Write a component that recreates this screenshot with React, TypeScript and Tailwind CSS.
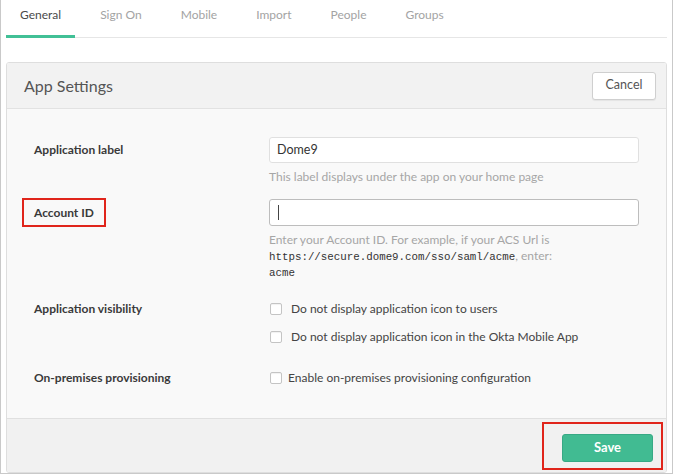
const tabs = ["General", "Sign On", "Mobile", "Import", "People", "Groups"];

function Checkbox() {
  return (
    <span className="inline-block w-[12px] h-[12px] shrink-0 bg-white border border-[#c4c4c4] rounded-[2px] shadow-[inset_0_1px_1px_rgba(0,0,0,0.06)]"></span>
  );
}

const mono = { fontFamily: "'Liberation Mono', monospace" };

export default function App() {
  return (
    <div
      className="w-[673px] h-[474px] bg-white border-x border-b border-[#c9c9c9] text-[#333] overflow-hidden"
      style={{ fontFamily: "Lato, 'Open Sans', sans-serif" }}
    >
      {/* Tabs */}
      <div className="ml-[5px] mr-[5px] flex gap-[11px] border-b border-[#e6e6e6] h-[38px]">
        {tabs.map((t, i) => (
          <div
            key={t}
            className={
              "px-[14px] pt-[6px] h-[38px] text-[12px] " +
              (i === 0
                ? "text-[#4a4a4a] border-b-[3px] border-[#41c096]"
                : "text-[#a3a3a3]")
            }
          >
            {t}
          </div>
        ))}
      </div>

      {/* Panel */}
      <div className="mt-[24px] mx-[5px] w-[661px] h-[411px] border border-[#dedede] rounded-[3px] flex flex-col overflow-hidden">
        <div className="h-[46px] shrink-0 bg-[#f2f2f2] border-b border-[#e2e2e2] flex items-center justify-between pl-[17px] pr-[10px]">
          <span className="text-[16px] text-[#555]">App Settings</span>
          <button className="w-[64px] h-[28px] bg-white border border-[#cfcfcf] rounded-[3px] text-[12.5px] text-[#555] shadow-[0_1px_1px_rgba(0,0,0,0.06)]">
            Cancel
          </button>
        </div>

        <div className="flex-1 bg-[#f9f9f9] pt-[28px] px-[27px] text-[12px]">
          {/* Application label */}
          <div className="grid grid-cols-[235px_1fr]">
            <div className="h-[26px] flex items-center font-bold text-[#3a3a3a]">Application label</div>
            <div>
              <div className="h-[26px] bg-white border border-[#e0e0e0] rounded-[3px] flex items-center px-[7px] text-[12.5px] text-[#333]">
                Dome9
              </div>
              <div className="mt-[6px] leading-[16px] text-[#a6a6a6]">
                This label displays under the app on your home page
              </div>
            </div>
          </div>

          {/* Account ID */}
          <div className="grid grid-cols-[235px_1fr] mt-[14px]">
            <div className="h-[27px] flex items-center">
              <span className="-ml-[12px] h-[29px] border-2 border-[#e0251b] px-[10px] flex items-center font-bold text-[#3a3a3a]">
                Account ID
              </span>
            </div>
            <div>
              <div className="h-[27px] bg-white border border-[#bdbdbd] rounded-[3px] flex items-center px-[8px]">
                <span className="w-px h-[15px] bg-[#444]"></span>
              </div>
              <div className="mt-[6px] leading-[16px] text-[#a6a6a6]">
                <div>Enter your Account ID. For example, if your ACS Url is</div>
                <div>
                  <span className="text-[10.8px] text-[#333]" style={mono}>
                    https://secure.dome9.com/sso/saml/acme
                  </span>
                  , enter:
                </div>
                <div className="text-[10.8px] text-[#333]" style={mono}>
                  acme
                </div>
              </div>
            </div>
          </div>

          {/* Application visibility */}
          <div className="grid grid-cols-[235px_1fr] mt-[18px]">
            <div className="h-[20px] flex items-center font-bold text-[#3a3a3a]">Application visibility</div>
            <div className="flex flex-col gap-[8px] text-[#444]">
              <div className="h-[20px] flex items-center gap-[9px] pl-px">
                <Checkbox />
                <span>Do not display application icon to users</span>
              </div>
              <div className="h-[20px] flex items-center gap-[9px] pl-px">
                <Checkbox />
                <span>Do not display application icon in the Okta Mobile App</span>
              </div>
            </div>
          </div>

          {/* On-premises provisioning */}
          <div className="grid grid-cols-[235px_1fr] mt-[21px]">
            <div className="h-[20px] flex items-center font-bold text-[#3a3a3a]">On-premises provisioning</div>
            <div className="h-[20px] flex items-center gap-[6px] pl-px text-[#444]">
              <Checkbox />
              <span>Enable on-premises provisioning configuration</span>
            </div>
          </div>
        </div>

        <div className="h-[54px] shrink-0 bg-[#f1f1f1] border-t border-[#e0e0e0] flex justify-end items-center pr-[3px]">
          <div className="border-2 border-[#e0251b] pl-[18px] pr-[8px] pt-[10px] pb-[6px]">
            <button className="w-[91px] h-[28px] bg-[#41bb92] border border-[#37a985] rounded-[3px] text-white text-[13px] font-bold">
              Save
            </button>
          </div>
        </div>
      </div>
    </div>
  );
}
